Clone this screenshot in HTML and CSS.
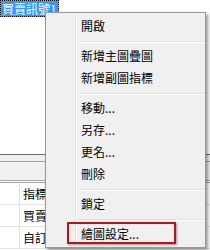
FILE: index.html
```html
<!DOCTYPE html>
<html>
<head>
<meta charset="utf-8">
<link rel="stylesheet" href="styles.css">
</head>
<body>
<div class="screen">
  <div class="pane">
    <span class="tag">買賣訊號1</span>
  </div>
  <div class="strip"></div>
  <div class="header"></div>
  <div class="grid">
    <div class="row"><div class="c0"></div><div class="c1">指標</div></div>
    <div class="row"><div class="c0"></div><div class="c1">買賣</div></div>
    <div class="row"><div class="c0"></div><div class="c1">自訂</div></div>
  </div>
  <div class="menu">
    <div class="item">開啟</div>
    <div class="sep"></div>
    <div class="item">新增主圖疊圖</div>
    <div class="item">新增副圖指標</div>
    <div class="sep"></div>
    <div class="item">移動...</div>
    <div class="item">另存...</div>
    <div class="item">更名...</div>
    <div class="item">刪除</div>
    <div class="sep"></div>
    <div class="item">鎖定</div>
    <div class="sep"></div>
    <div class="item marked">繪圖設定...</div>
  </div>
</div>
</body>
</html>
```

FILE: styles.css
```css
html, body {
  margin: 0;
  padding: 0;
}

.screen {
  position: relative;
  width: 210px;
  height: 250px;
  overflow: hidden;
  background: #ffffff;
  font-family: "Noto Sans CJK TC", "Liberation Sans", sans-serif;
  font-size: 12px;
  color: #000000;
}

.pane {
  height: 154px;
  background: #ffffff;
}

.tag {
  display: inline-block;
  margin: 1px;
  padding: 0 1px;
  line-height: 15px;
  height: 15px;
  background: #3399ff;
  color: #ffffff;
  box-shadow: 0 0 0 1px #e8902e;
  outline: 1px dotted #000000;
  vertical-align: top;
}

.strip {
  height: 6px;
  background: #f0f0f0;
  border-top: 1px solid #6b6b6b;
  border-bottom: 1px solid #a0a0a0;
}

.header {
  height: 18px;
  background: #f0f0f0;
  border-bottom: 1px solid #a8a8a8;
}

.grid {
  margin-top: 1px;
  border-top: 1px solid #a0a0a0;
}

.row {
  display: flex;
  height: 22px;
  box-sizing: border-box;
  border-bottom: 1px solid #e2e2e2;
  line-height: 21px;
}

.c0 {
  width: 19px;
  border-right: 1px solid #e2e2e2;
}

.c1 {
  padding-left: 3px;
}

.menu {
  position: absolute;
  left: 45px;
  top: 12px;
  width: 161px;
  box-sizing: border-box;
  padding: 2px 0 2px 2px;
  border: 1px solid #979797;
  background-color: #f0f0f0;
  background-image: linear-gradient(to right,
    transparent 29px, #e2e3e3 29px, #e2e3e3 30px,
    #ffffff 30px, #ffffff 31px, transparent 31px);
  box-shadow: 2px 2px 3px rgba(0, 0, 0, 0.4);
}

.item {
  position: relative;
  height: 22px;
  line-height: 22px;
  padding-left: 33px;
  white-space: nowrap;
}

.sep {
  height: 8px;
  margin-left: 29px;
  background-image:
    linear-gradient(#e0e0e0, #e0e0e0),
    linear-gradient(#ffffff, #ffffff);
  background-repeat: no-repeat;
  background-size: 100% 1px, 100% 1px;
  background-position: 0 4px, 0 5px;
}

.marked::after {
  content: "";
  position: absolute;
  left: 19px;
  top: -1px;
  width: 109px;
  height: 22px;
  box-sizing: border-box;
  border: 2px solid #b9121b;
  box-shadow: 1px 1px 2px rgba(0, 0, 0, 0.35);
}
```
